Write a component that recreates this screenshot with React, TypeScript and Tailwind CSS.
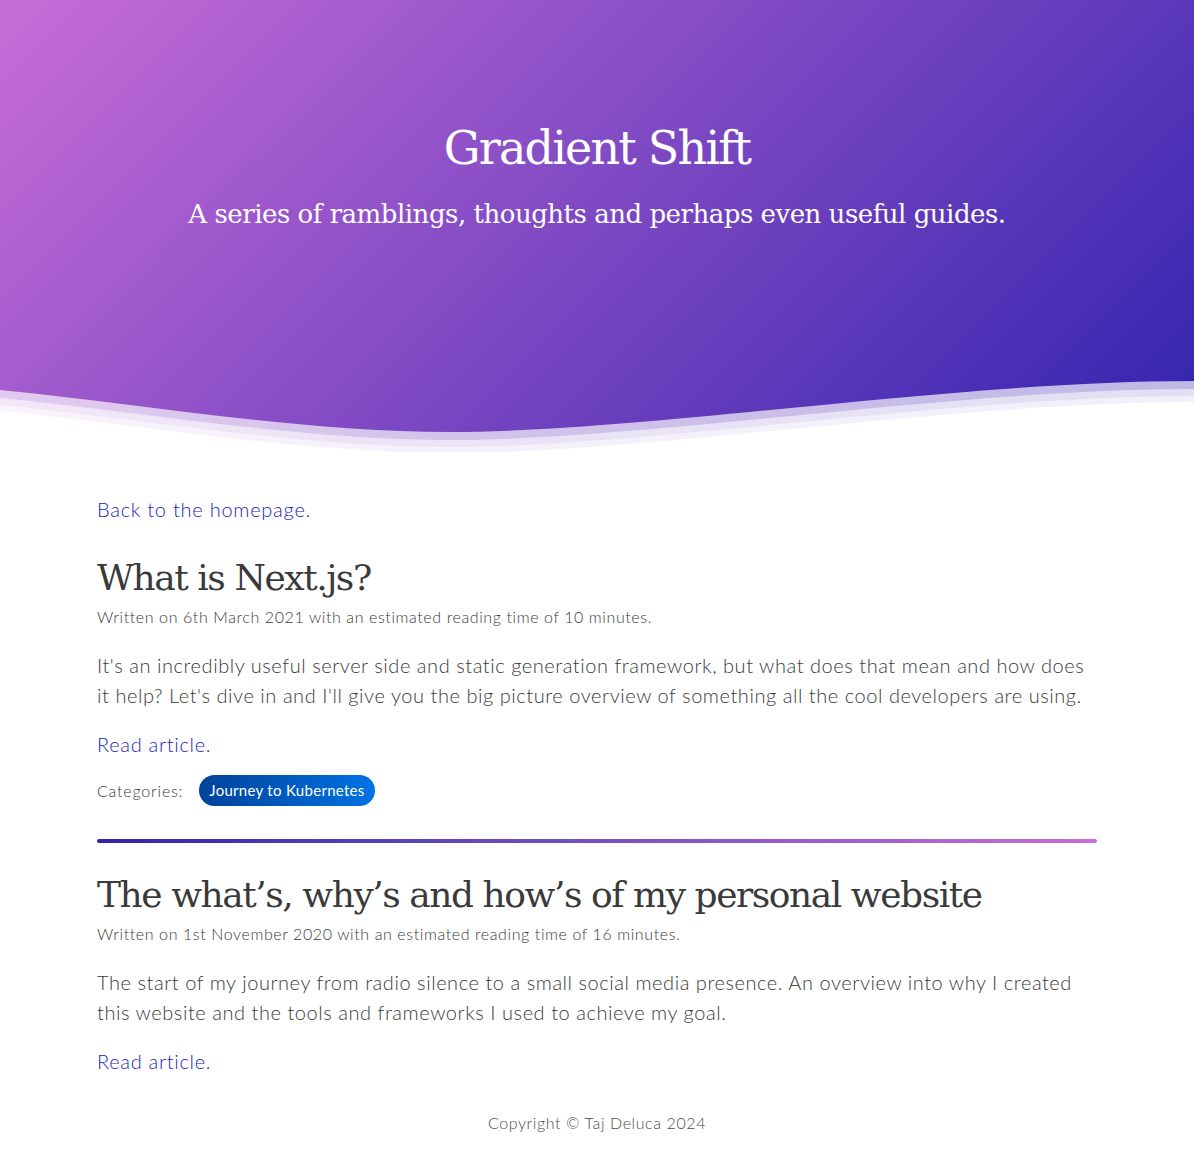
const body = { fontFamily: '"Lato", "Open Sans", sans-serif' };
const slab = { fontFamily: '"DejaVu Serif", "Liberation Serif", serif' };

const posts = [
  {
    title: "What is Next.js?",
    meta: "Written on 6th March 2021 with an estimated reading time of 10 minutes.",
    summary:
      "It's an incredibly useful server side and static generation framework, but what does that mean and how does it help? Let's dive in and I'll give you the big picture overview of something all the cool developers are using.",
    categories: ["Journey to Kubernetes"],
  },
  {
    title: "The what\u2019s, why\u2019s and how\u2019s of my personal website",
    meta: "Written on 1st November 2020 with an estimated reading time of 16 minutes.",
    summary:
      "The start of my journey from radio silence to a small social media presence. An overview into why I created this website and the tools and frameworks I used to achieve my goal.",
    categories: [],
  },
];

const wave =
  "M0,390 C150,405 300,432 450,432 C650,432 950,381 1194,381 L1194,480 L0,480 Z";

function Header() {
  return (
    <header className="relative h-[452px] bg-[linear-gradient(135deg,#c86dd7,#3023ae)] text-white">
      <div className="flex flex-col items-center pt-[118px] text-center">
        <h1 className="text-[46px] leading-[60px] tracking-[-1.8px]" style={slab}>
          Gradient Shift
        </h1>
        <p className="mt-[18px] text-[26px] leading-[36px] tracking-[-0.48px]" style={slab}>
          A series of ramblings, thoughts and perhaps even useful guides.
        </p>
      </div>
      {/* wave overlay */}
      <svg
        className="absolute bottom-0 left-0 h-[82px] w-full"
        viewBox="0 370 1194 82"
        preserveAspectRatio="none"
      >
        <path d={wave} fill="#fff" fillOpacity={0.68} />
        <path d={wave} fill="#fff" fillOpacity={0.55} transform="translate(0,8)" />
        <path d={wave} fill="#fff" fillOpacity={0.5} transform="translate(0,15)" />
        <path d={wave} fill="#fff" transform="translate(0,21)" />
      </svg>
    </header>
  );
}

function Post({ post }: { post: (typeof posts)[number] }) {
  return (
    <article>
      <h2 className="text-[36px] leading-[48px] text-[#3a3a3a] tracking-[-1.45px]" style={slab}>
        {post.title}
      </h2>
      <p className="mt-[3px] text-[16px] leading-[24px] font-light tracking-[0.6px] text-[#3a3a3a]">
        {post.meta}
      </p>
      <p className="mt-[21px] text-[20px] leading-[30px] font-light tracking-[0.55px] text-[#3a3a3a]">
        {post.summary}
      </p>
      <a
        href="#"
        className="mt-[19px] block text-[20px] leading-[30px] font-light tracking-[0.7px] text-[#2326bd]"
      >
        Read article.
      </a>
      {post.categories.length > 0 && (
        <div className="mt-[16px] flex items-center gap-[16px]">
          <span className="text-[16px] font-light tracking-[0.8px] text-[#3a3a3a]">Categories:</span>
          {post.categories.map((c) => (
            <span
              key={c}
              className="rounded-full bg-linear-to-r from-[#00439a] to-[#0072e5] px-[10px] py-[5px] text-[15px] leading-[21px] tracking-[0.3px] text-white"
            >
              {c}
            </span>
          ))}
        </div>
      )}
    </article>
  );
}

export default function App() {
  return (
    <div className="min-h-[1157px] bg-white" style={body}>
      <Header />
      <main className="mx-auto max-w-[1000px] pt-[42px]">
        <a
          href="#"
          className="text-[20px] leading-[30px] font-light tracking-[0.75px] text-[#2326bd]"
        >
          Back to the homepage.
        </a>
        <div className="mt-[30px]">
          <Post post={posts[0]} />
        </div>
        <div className="mt-[33px] h-[4px] rounded-full bg-linear-to-r from-[#3023ae] to-[#c86dd7]" />
        <div className="mt-[28px]">
          <Post post={posts[1]} />
        </div>
      </main>
      <footer className="pt-[35px] pb-[24px] text-center text-[16px] font-light tracking-[0.6px] text-[#4a4a4a]">
        Copyright © Taj Deluca 2024
      </footer>
    </div>
  );
}
